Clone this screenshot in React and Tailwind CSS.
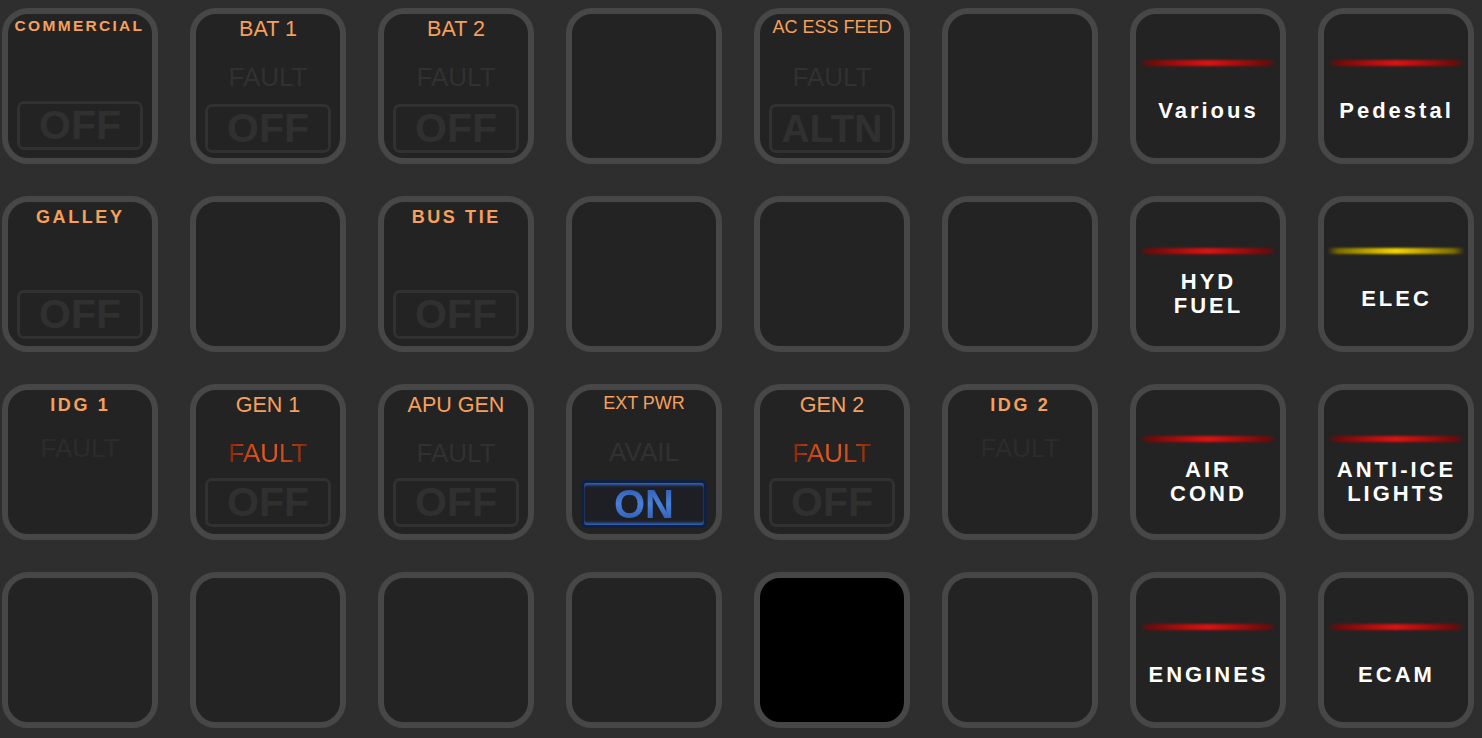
import React from "react";

function Btn({ children, black }) {
  return (
    <div
      className={
        "w-[156px] h-[156px] rounded-[26px] border-[6px] border-[#474747] flex flex-col items-center overflow-hidden " +
        (black ? "bg-black" : "bg-[#232323]")
      }
    >
      {children}
    </div>
  );
}

function OffBox({ text = "OFF", cls = "mt-auto mb-[5px]", size = "text-[41px]" }) {
  return (
    <div
      className={
        "w-[126px] h-[49px] shrink-0 rounded-[7px] border-[3px] border-[#313131] flex items-center justify-center font-bold leading-none text-[#303030] " +
        size +
        " " +
        cls
      }
    >
      {text}
    </div>
  );
}

function OnBox() {
  return (
    <div className="mt-auto mb-[6px] w-[126px] h-[48px] shrink-0 rounded-[5px] border-[3px] border-[#0f2142] shadow-[inset_0_3px_3px_-1px_#3465c4,inset_0_-3px_3px_-1px_#3465c4] bg-[#1d1f24] flex items-center justify-center">
      <span className="text-[40px] font-bold leading-none bg-[linear-gradient(180deg,#2a58b0,#4a7fd6_50%,#2a58b0)] bg-clip-text text-transparent">
        ON
      </span>
    </div>
  );
}

function Mid({ text = "FAULT", cls = "mt-[14px]", tone = "dim" }) {
  if (tone === "red") {
    return (
      <div className={"h-[34px] shrink-0 flex items-center " + cls}>
        <span className="text-[26px] leading-none bg-[linear-gradient(90deg,#852709,#e0501b_35%,#ea5a20_55%,#852709)] bg-clip-text text-transparent">
          {text}
        </span>
      </div>
    );
  }
  return (
    <div
      className={
        "h-[34px] shrink-0 flex items-center text-[26px] leading-none " +
        (tone === "dimmer" ? "text-[#2c2c2c] " : "text-[#313131] ") +
        cls
      }
    >
      {text}
    </div>
  );
}

function Label({ text, cls }) {
  return (
    <div className={"shrink-0 flex items-center justify-center leading-none text-[#f6a05c] whitespace-nowrap " + cls}>
      {text}
    </div>
  );
}

function Nav({ lines, color = "red" }) {
  const line =
    color === "red"
      ? "bg-[linear-gradient(90deg,transparent,#700a0a_8%,#bb0e0e_35%,#dc1212_50%,#bb0e0e_65%,#700a0a_92%,transparent)]"
      : "bg-[linear-gradient(90deg,transparent,#7a6a00_8%,#cdb000_35%,#f4d600_50%,#cdb000_65%,#7a6a00_92%,transparent)]";
  return (
    <Btn>
      <div className="h-[46px] shrink-0" />
      <div className={"w-[138px] h-[6px] shrink-0 rounded-full blur-[1px] " + line} />
      <div
        className={
          "flex flex-col items-center text-white font-bold text-[22px] tracking-[3px] pl-[1px] leading-[24px] " +
          (lines.length > 1 ? "mt-[16px]" : "mt-[33px]")
        }
      >
        {lines.map((l) => (
          <div key={l}>{l}</div>
        ))}
      </div>
    </Btn>
  );
}

export default function App() {
  const reg20 = "h-[32px] text-[21.5px]";
  const reg18 = "h-[26px] text-[18px]";
  const bold18 = "h-[30px] text-[18px] font-bold tracking-[2.6px] pl-[0.5px]";

  return (
    <div className="w-full min-h-[738px] bg-[#2e2e2e] font-['Liberation_Sans',Arial,sans-serif] pl-[2px] pt-[8px]">
      <div className="grid grid-cols-[repeat(8,156px)] auto-rows-[156px] gap-[32px]">
        {/* Row 1 */}
        <Btn>
          <Label text="COMMERCIAL" cls="h-[24px] text-[15.5px] font-bold tracking-[2.3px] pr-[1px]" />
          <OffBox cls="mt-auto mb-[8px]" />
        </Btn>
        <Btn>
          <Label text="BAT 1" cls={reg20} />
          <Mid cls="mt-[14px]" />
          <OffBox />
        </Btn>
        <Btn>
          <Label text="BAT 2" cls={reg20} />
          <Mid cls="mt-[14px]" />
          <OffBox />
        </Btn>
        <Btn />
        <Btn>
          <Label text="AC ESS FEED" cls={reg18} />
          <Mid cls="mt-[20px]" />
          <OffBox text="ALTN" size="text-[39px]" />
        </Btn>
        <Btn />
        <Nav lines={["Various"]} />
        <Nav lines={["Pedestal"]} />

        {/* Row 2 */}
        <Btn>
          <Label text="GALLEY" cls={bold18} />
          <OffBox cls="mt-auto mb-[7px]" />
        </Btn>
        <Btn />
        <Btn>
          <Label text="BUS TIE" cls={bold18} />
          <OffBox cls="mt-auto mb-[7px]" />
        </Btn>
        <Btn />
        <Btn />
        <Btn />
        <Nav lines={["HYD", "FUEL"]} />
        <Nav lines={["ELEC"]} color="yellow" />

        {/* Row 3 */}
        <Btn>
          <Label text="IDG 1" cls={bold18} />
          <Mid cls="mt-[11px]" tone="dimmer" />
        </Btn>
        <Btn>
          <Label text="GEN 1" cls={reg20} />
          <Mid cls="mt-[14px]" tone="red" />
          <OffBox cls="mt-auto mb-[7px]" />
        </Btn>
        <Btn>
          <Label text="APU GEN" cls={reg20} />
          <Mid cls="mt-[14px]" />
          <OffBox cls="mt-auto mb-[7px]" />
        </Btn>
        <Btn>
          <Label text="EXT PWR" cls={reg18} />
          <Mid text="AVAIL" cls="mt-[19px]" />
          <OnBox />
        </Btn>
        <Btn>
          <Label text="GEN 2" cls={reg20} />
          <Mid cls="mt-[14px]" tone="red" />
          <OffBox cls="mt-auto mb-[7px]" />
        </Btn>
        <Btn>
          <Label text="IDG 2" cls={bold18} />
          <Mid cls="mt-[11px]" tone="dimmer" />
        </Btn>
        <Nav lines={["AIR", "COND"]} />
        <Nav lines={["ANTI-ICE", "LIGHTS"]} />

        {/* Row 4 */}
        <Btn />
        <Btn />
        <Btn />
        <Btn />
        <Btn black />
        <Btn />
        <Nav lines={["ENGINES"]} />
        <Nav lines={["ECAM"]} />
      </div>
    </div>
  );
}
